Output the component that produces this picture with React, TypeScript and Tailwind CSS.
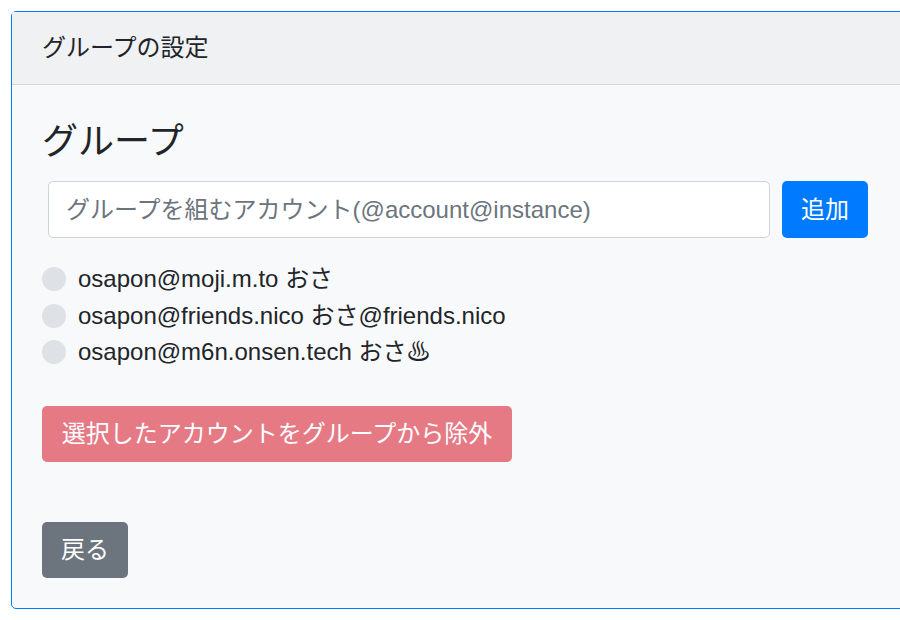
const font = "font-['Liberation_Sans','Noto_Sans_CJK_JP',sans-serif]";

const accounts = [
  { acct: "osapon@moji.m.to", name: "おさ" },
  { acct: "osapon@friends.nico", name: "おさ@friends.nico" },
  { acct: "osapon@m6n.onsen.tech", name: "おさ♨" },
];

export default function App() {
  return (
    <div className={`${font} h-[620px] w-[900px] overflow-hidden bg-white pl-[11px] pt-[11px] text-[#212529]`}>
      <div className="h-[598px] w-[920px] rounded-[5px] border border-[#007bff] bg-[#f8f9fa]">
        {/* header */}
        <div className="flex h-[73px] items-center border-b border-[#d5d6d8] bg-[#f0f1f3] pl-[30px] text-[24px]">
          グループの設定
        </div>
        <div className="pl-[30px] pt-[32px]">
          <h4 className="text-[36px] leading-[50px]">グループ</h4>
          <div className="mt-[14px] flex w-[826px] gap-[12px] pl-[6px]">
            <input
              className="h-[57px] w-[722px] rounded-[5px] border border-[#ced4da] bg-white px-[17px] text-[24px] placeholder:text-[#6c757d]"
              placeholder="グループを組むアカウント(@account@instance)"
            />
            <button className="h-[57px] w-[86px] rounded-[5px] bg-[#007bff] text-[24px] text-white">追加</button>
          </div>
          <div className="mt-[23px] flex flex-col">
            {accounts.map((a) => (
              <label key={a.acct} className="flex h-[36.5px] items-center text-[24px]">
                <span className="mr-[12px] h-[24px] w-[24px] rounded-full bg-[#dee2e6]" />
                {a.acct} {a.name}
              </label>
            ))}
          </div>
          <button className="mt-[35px] block h-[56px] w-[470px] rounded-[5px] bg-[#e57a85] text-[24px] text-white">
            選択したアカウントをグループから除外
          </button>
          <button className="mt-[60px] block h-[56px] w-[86px] rounded-[5px] bg-[#6c757d] text-[24px] text-white">
            戻る
          </button>
        </div>
      </div>
    </div>
  );
}
